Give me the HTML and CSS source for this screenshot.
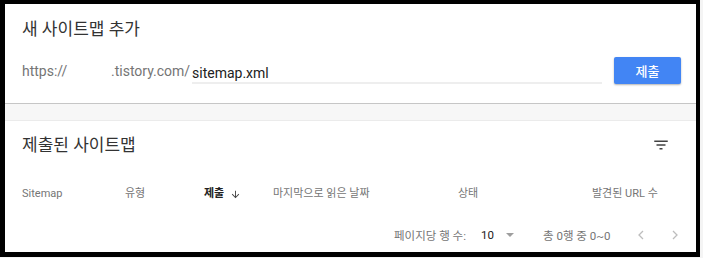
FILE: index.html
```html
<!DOCTYPE html>
<html lang="ko">
<head>
<meta charset="utf-8">
<title>Sitemaps</title>
<link rel="stylesheet" href="styles.css">
</head>
<body>
<div class="frame">
  <div class="panel">
    <section class="add-card">
      <h2 class="title">새 사이트맵 추가</h2>
      <div class="add-row">
        <span class="prefix">https://</span>
        <span class="domain">.tistory.com/</span>
        <span class="field">sitemap.xml</span>
        <button class="submit" type="button">제출</button>
      </div>
    </section>
    <div class="band"></div>
    <section class="list-card">
      <div class="list-head">
        <h2 class="title">제출된 사이트맵</h2>
        <svg class="filter" width="18" height="18" viewBox="0 0 24 24"><path d="M10 18h4v-2h-4v2zM3 6v2h18V6H3zm3 7h12v-2H6v2z" fill="#424242"/></svg>
      </div>
      <div class="cols">
        <span>Sitemap</span>
        <span>유형</span>
        <span class="sorted">제출 <svg class="arrow" width="11" height="11" viewBox="0 0 24 24"><path d="M20 12l-1.41-1.41L13 16.17V4h-2v12.17l-5.58-5.59L4 12l8 8 8-8z" fill="#424242"/></svg></span>
        <span>마지막으로 읽은 날짜</span>
        <span>상태</span>
        <span>발견된 URL 수</span>
      </div>
      <div class="pager">
        <span class="rpp">페이지당 행 수:</span>
        <span class="count">10</span>
        <svg class="drop" width="8" height="4" viewBox="0 0 8 4"><path d="M0 0h8L4 4z" fill="#9e9e9e"/></svg>
        <span class="range">총 0행 중 0~0</span>
        <svg class="chev prev" width="6" height="10" viewBox="0 0 6 10"><path d="M5 1L1 5l4 4" fill="none" stroke="#bdbdbd" stroke-width="1.3"/></svg>
        <svg class="chev next" width="6" height="10" viewBox="0 0 6 10"><path d="M1 1l4 4-4 4" fill="none" stroke="#bdbdbd" stroke-width="1.3"/></svg>
      </div>
    </section>
  </div>
</div>
</body>
</html>
```
FILE: styles.css
```css
html, body {
  margin: 0;
  padding: 0;
  background: #f4f4f4;
}
body {
  width: 703px;
  height: 258px;
  overflow: hidden;
  font-family: Roboto, "Noto Sans CJK KR", sans-serif;
}
.frame {
  width: 691px;
  height: 248px;
  border-style: solid;
  border-color: #000;
  border-width: 4px 4px 5px 5px;
  background: #fff;
}
.panel {
  display: flex;
  flex-direction: column;
  height: 100%;
}
.title {
  margin: 0;
  font-weight: 400;
  font-size: 17px;
  line-height: 24px;
  color: #333;
}
.add-card {
  height: 100px;
  box-sizing: border-box;
  padding: 13px 15px 0 17px;
  border-bottom: 1px solid #c6c6c6;
}
.add-row {
  display: flex;
  align-items: center;
  margin-top: 16px;
  height: 27px;
  font-size: 14px;
}
.prefix, .domain {
  color: #757575;
  flex: none;
}
.prefix {
  width: 89px;
}
.domain {
  width: 81px;
}
.field {
  flex: 1;
  color: #212121;
  height: 24px;
  line-height: 26px;
  border-bottom: 2px solid #eeeeee;
  box-sizing: border-box;
  margin-top: 2px;
}
.submit {
  margin-left: 12px;
  width: 67px;
  height: 27px;
  border: 0;
  border-radius: 2px;
  background: #4285f4;
  color: #fff;
  font-family: Roboto, "Noto Sans CJK KR", sans-serif;
  font-size: 13px;
  font-weight: 500;
  box-shadow: 0 1px 2px rgba(0,0,0,0.3);
  padding: 0;
}
.band {
  height: 16px;
  background: #f7f7f7;
  border-bottom: 1px solid #ebebeb;
}
.list-card {
  flex: 1;
  padding: 12px 0 0 17px;
}
.list-head {
  display: flex;
  align-items: center;
  justify-content: space-between;
  padding-right: 26px;
  height: 24px;
}
.cols {
  display: grid;
  grid-template-columns: 103px 79px 69px 185px 134px auto;
  margin-top: 29px;
  font-size: 11px;
  line-height: 16px;
  color: #757575;
}
.sorted {
  color: #212121;
  font-weight: 700;
  display: flex;
  align-items: center;
}
.arrow {
  margin-left: 6px;
}
.pager {
  display: flex;
  align-items: center;
  margin-top: 23px;
  height: 20px;
  font-size: 11.5px;
  color: #757575;
  padding-left: 372px;
}
.rpp {
  width: 87px;
  flex: none;
}
.count {
  width: 25px;
  flex: none;
  color: #212121;
}
.drop {
  flex: none;
}
.range {
  margin-left: 29px;
  width: 95px;
  flex: none;
}
.prev {
  flex: none;
}
.next {
  margin-left: 28px;
  flex: none;
}
```
